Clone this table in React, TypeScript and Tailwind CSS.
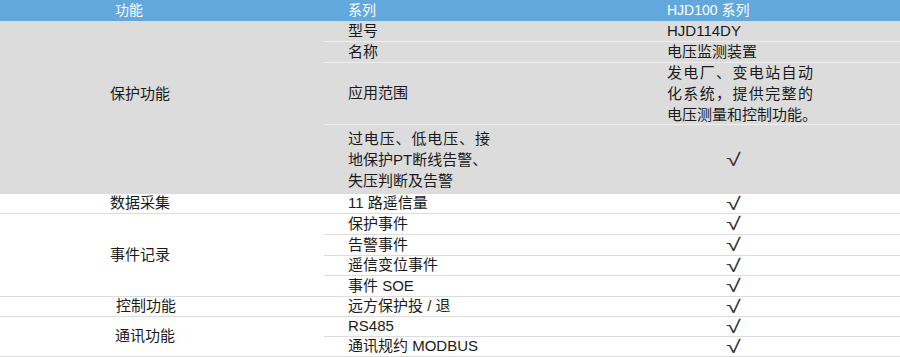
import React from "react";

const font = {
  fontFamily:
    '"Liberation Sans", "Noto Sans CJK SC", sans-serif',
};

const Check = () => (
  <span
    className="inline-block text-[18px] leading-[16px] text-[#333] scale-x-150 origin-left"
    style={{ fontFamily: '"Liberation Sans", sans-serif' }}
  >
    √
  </span>
);

export default function App() {
  const grayLine = "border-b border-[#eeeeee]";
  const whiteLine = "border-b border-[#dcdcdc]";
  const chk = "flex items-center pl-[83px]";
  return (
    <div
      className="w-[900px] h-[357px] bg-white text-[15px] text-[#1a1a1a] overflow-hidden"
      style={font}
    >
      <div className="grid grid-cols-[324px_319px_257px] grid-rows-[21px_21px_21px_62px_69px_20px_21px_21px_20px_21px_20px_20px_20px]">
        {/* header */}
        <div className="col-span-3 grid grid-cols-[324px_319px_257px] bg-[#62a8dd] text-white text-[14px] items-center">
          <div className="pl-[115px]">功能</div>
          <div className="pl-[24px]">系列</div>
          <div className="pl-[24px]">HJD100 系列</div>
        </div>

        {/* 保护功能 */}
        <div className="row-span-4 bg-[#dcdcdc] flex items-center pl-[110px] pb-[26px]">
          保护功能
        </div>
        <div className={`bg-[#dcdcdc] ${grayLine} flex items-center pl-[24px]`}>型号</div>
        <div className={`bg-[#dcdcdc] ${grayLine} flex items-center pl-[24px]`}>HJD114DY</div>

        <div className={`bg-[#dcdcdc] ${grayLine} flex items-center pl-[24px]`}>名称</div>
        <div className={`bg-[#dcdcdc] ${grayLine} flex items-center pl-[24px]`}>电压监测装置</div>

        <div className={`bg-[#dcdcdc] ${grayLine} flex items-center pl-[24px]`}>应用范围</div>
        <div className={`bg-[#dcdcdc] ${grayLine} flex items-center pl-[24px]`}>
          <div className="leading-[21px]">
            <div className="w-[146px] text-justify [text-align-last:justify]">发电厂、变电站自动</div>
            <div className="w-[146px] text-justify [text-align-last:justify]">化系统，提供完整的</div>
            <div className="whitespace-nowrap">电压测量和控制功能。</div>
          </div>
        </div>

        <div className="bg-[#dcdcdc] flex items-center pl-[24px]">
          <div className="leading-[21px]">
            <div className="w-[142px] text-justify [text-align-last:justify]">过电压、低电压、接</div>
            <div className="whitespace-nowrap">地保护PT断线告警、</div>
            <div className="whitespace-nowrap">失压判断及告警</div>
          </div>
        </div>
        <div className={`bg-[#dcdcdc] ${chk}`}>
          <Check />
        </div>

        {/* 数据采集 */}
        <div className={`${whiteLine} flex items-center pl-[110px]`}>数据采集</div>
        <div className={`${whiteLine} flex items-center pl-[24px]`}>11 路遥信量</div>
        <div className={`${whiteLine} ${chk}`}><Check /></div>

        {/* 事件记录 */}
        <div className={`row-span-4 ${whiteLine} flex items-center pl-[110px]`}>事件记录</div>
        <div className={`${whiteLine} flex items-center pl-[24px]`}>保护事件</div>
        <div className={`${whiteLine} ${chk}`}><Check /></div>
        <div className={`${whiteLine} flex items-center pl-[24px]`}>告警事件</div>
        <div className={`${whiteLine} ${chk}`}><Check /></div>
        <div className={`${whiteLine} flex items-center pl-[24px]`}>遥信变位事件</div>
        <div className={`${whiteLine} ${chk}`}><Check /></div>
        <div className={`${whiteLine} flex items-center pl-[24px]`}>事件 SOE</div>
        <div className={`${whiteLine} ${chk}`}><Check /></div>

        {/* 控制功能 */}
        <div className={`${whiteLine} flex items-center pl-[116px]`}>控制功能</div>
        <div className={`${whiteLine} flex items-center pl-[24px]`}>远方保护投 / 退</div>
        <div className={`${whiteLine} ${chk}`}><Check /></div>

        {/* 通讯功能 */}
        <div className={`row-span-2 ${whiteLine} flex items-center pl-[115px]`}>通讯功能</div>
        <div className={`${whiteLine} flex items-center pl-[24px]`}>RS485</div>
        <div className={`${whiteLine} ${chk}`}><Check /></div>
        <div className={`${whiteLine} flex items-center pl-[24px]`}>通讯规约 MODBUS</div>
        <div className={`${whiteLine} ${chk}`}><Check /></div>
      </div>
    </div>
  );
}
